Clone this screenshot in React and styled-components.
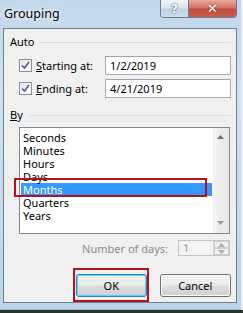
import React from "react";
import styled, { createGlobalStyle } from "styled-components";

const GlobalStyle = createGlobalStyle`
  html, body {
    margin: 0;
    padding: 0;
    background: #27332b;
  }
  body {
    width: 243px;
    height: 313px;
    overflow: hidden;
    font-family: "Noto Sans", "Liberation Sans", sans-serif;
    font-size: 11px;
    color: #000;
  }
`;

// window frame
const Frame = styled.div`
  width: 243px;
  height: 310px;
  box-sizing: border-box;
  padding: 0 6px 7px 3px;
  display: flex;
  flex-direction: column;
  background: linear-gradient(180deg, #c2d7ec 0%, #cfe0f1 30%, #c6daee 70%, #bcd3ea 100%);
  box-shadow: inset -2px 0 0 #e4eef8, inset 0 -1px 0 #9db6cf;
`;

const TitleBar = styled.div`
  height: 28px;
  display: flex;
  align-items: flex-start;
  flex-shrink: 0;
`;

const Title = styled.div`
  padding: 7px 0 0 1px;
  font-size: 12.5px;
  line-height: 14px;
  color: #000;
  text-shadow: 0 0 6px #ffffff, 0 0 3px #ffffff;
`;

const CaptionButtons = styled.div`
  margin-left: auto;
  display: flex;
  border: 1px solid #6b7d90;
  border-top: none;
  border-radius: 0 0 4px 4px;
  overflow: hidden;
  height: 17px;
`;

const CaptionButton = styled.div`
  width: ${({ w }) => w}px;
  height: 17px;
  display: flex;
  align-items: center;
  justify-content: center;
  color: #fff;
  font-family: "DejaVu Sans", sans-serif;
  font-weight: bold;
  font-size: ${({ close }) => (close ? "13px" : "12px")};
  background: ${({ close }) =>
    close
      ? "linear-gradient(180deg, #e9a99c 0%, #d47566 45%, #c24a3a 55%, #c9604c 100%)"
      : "linear-gradient(180deg, #f0f5fa 0%, #d9e4ef 45%, #c2d2e3 55%, #cedcea 100%)"};
  border-left: ${({ close }) => (close ? "1px solid #6b7d90" : "none")};
  text-shadow: ${({ close }) =>
    close ? "0 0 2px #7a1f14" : "0 0 1px #44576b, 0 0 2px #44576b"};
`;

const Client = styled.div`
  flex: 1;
  background: #f0f0f0;
  border: 1px solid #70808f;
  display: flex;
  flex-direction: column;
  padding: 0 5px 0 6px;
`;

const GroupHeader = styled.div`
  display: flex;
  align-items: center;
  height: 16px;
  margin-top: ${({ mt }) => mt}px;
  line-height: 16px;
  &::after {
    content: "";
    flex: 1;
    height: 1px;
    background: #d5dfe5;
    margin-left: 6px;
    margin-top: 1px;
  }
`;

const FieldRow = styled.div`
  display: flex;
  align-items: center;
  height: 19px;
  margin-top: ${({ mt }) => mt}px;
  padding-left: 9px;
`;

const Check = styled.div`
  width: 11px;
  height: 11px;
  border: 1px solid #8e8f8f;
  background: linear-gradient(135deg, #dcdcdc 0%, #f4f4f4 60%, #ffffff 100%);
  box-shadow: inset 0 0 0 1px #f4f4f4;
  display: flex;
  align-items: center;
  justify-content: center;
`;

const CheckLabel = styled.label`
  margin-left: 4px;
  width: 69px;
  line-height: 15px;
`;

const TextBox = styled.div`
  width: 120px;
  height: 17px;
  border: 1px solid #abadb3;
  border-top-color: #a2a4a9;
  background: #fff;
  padding-left: 4px;
  box-sizing: content-box;
  line-height: 17px;
`;

const ListWrap = styled.div`
  position: relative;
  margin: 4px 0 0 9px;
  width: 211px;
  height: 107px;
  box-sizing: border-box;
  border: 1px solid #828790;
  background: #fff;
  display: flex;
`;

const Items = styled.div`
  flex: 1;
  padding: 3px 0 0 1px;
`;

const Item = styled.div`
  height: 13px;
  line-height: 13px;
  padding-left: 2px;
  background: ${({ selected }) => (selected ? "#3399ff" : "transparent")};
  color: ${({ selected }) => (selected ? "#fff" : "#000")};
`;

const ScrollBar = styled.div`
  width: 17px;
  background: linear-gradient(90deg, #f7f7f7 0%, #ececec 40%, #e8e8e8 100%);
  display: flex;
  flex-direction: column;
  justify-content: space-between;
  align-items: center;
  padding: 7px 0 8px;
  box-sizing: border-box;
`;

const Mark = styled.div`
  position: absolute;
  left: -6px;
  top: 50px;
  width: 189px;
  height: 15px;
  border: 2px solid #b3121b;
`;

const DaysRow = styled.div`
  display: flex;
  align-items: center;
  justify-content: flex-end;
  margin-top: 6px;
  height: 16px;
  padding-right: 1px;
  color: #8a8a8a;
`;

const Spin = styled.div`
  margin-left: 10px;
  display: flex;
  height: 16px;
  border: 1px solid #c2c5c8;
  background: #f4f4f4;
  box-sizing: border-box;
`;

const SpinValue = styled.div`
  width: 30px;
  padding-left: 4px;
  line-height: 14px;
  color: #9a9a9a;
  border-right: 1px solid #d6d6d6;
`;

const SpinButtons = styled.div`
  width: 15px;
  display: flex;
  flex-direction: column;
`;

const SpinButton = styled.div`
  flex: 1;
  display: flex;
  align-items: center;
  justify-content: center;
  border: 1px solid #d0d0d0;
  background: #f0f0f0;
`;

const ButtonRow = styled.div`
  display: flex;
  margin-top: 18px;
  padding-left: 66px;
  gap: 13px;
`;

const Button = styled.div`
  position: relative;
  width: ${({ w }) => w}px;
  height: 23px;
  box-sizing: border-box;
  border: 1px solid ${({ def }) => (def ? "#3c7fb1" : "#707070")};
  border-radius: 3px;
  background: linear-gradient(180deg, #f2f2f2 0%, #ebebeb 48%, #dddddd 52%, #cfcfcf 100%);
  box-shadow: inset 0 0 0 1px ${({ def }) => (def ? "#48d8fb" : "#fcfcfc")};
  display: flex;
  align-items: center;
  justify-content: center;
  line-height: 15px;
  &::after {
    display: ${({ marked }) => (marked ? "block" : "none")};
    content: "";
    position: absolute;
    left: -4px;
    top: -7px;
    right: -3px;
    bottom: -6px;
    border: 2px solid #b3121b;
  }
`;

const Tri = ({ down, color = "#6b6b6b" }) => (
  <svg width="7" height="4" viewBox="0 0 7 4">
    <polygon points={down ? "0,0 7,0 3.5,4" : "0,4 7,4 3.5,0"} fill={color} />
  </svg>
);

const CheckMark = () => (
  <svg width="9" height="9" viewBox="0 0 9 9">
    <path d="M1 4.5 L3.5 7 L8 1" stroke="#4a5f97" strokeWidth="1.6" fill="none" />
  </svg>
);

const items = ["Seconds", "Minutes", "Hours", "Days", "Months", "Quarters", "Years"];

export default function App() {
  return (
    <>
      <GlobalStyle />
      <Frame>
        <TitleBar>
          <Title>Grouping</Title>
          <CaptionButtons>
            <CaptionButton w={27}>?</CaptionButton>
            <CaptionButton w={47} close>
              ✕
            </CaptionButton>
          </CaptionButtons>
        </TitleBar>
        <Client>
          <GroupHeader mt={5}>Auto</GroupHeader>
          <FieldRow mt={6}>
            <Check>
              <CheckMark />
            </Check>
            <CheckLabel>
              <u>S</u>tarting at:
            </CheckLabel>
            <TextBox>1/2/2019</TextBox>
          </FieldRow>
          <FieldRow mt={4}>
            <Check>
              <CheckMark />
            </Check>
            <CheckLabel>
              <u>E</u>nding at:
            </CheckLabel>
            <TextBox>4/21/2019</TextBox>
          </FieldRow>
          <GroupHeader mt={9}>
            <span>
              <u>B</u>y
            </span>
          </GroupHeader>
          <ListWrap>
            <Items>
              {items.map((v) => (
                <Item key={v} selected={v === "Months"}>
                  {v}
                </Item>
              ))}
            </Items>
            <ScrollBar>
              <Tri />
              <Tri down color="#9a9a9a" />
            </ScrollBar>
            <Mark />
          </ListWrap>
          <DaysRow>
            Number of days:
            <Spin>
              <SpinValue>1</SpinValue>
              <SpinButtons>
                <SpinButton>
                  <Tri color="#b0b0b0" />
                </SpinButton>
                <SpinButton>
                  <Tri down color="#b0b0b0" />
                </SpinButton>
              </SpinButtons>
            </Spin>
          </DaysRow>
          <ButtonRow>
            <Button w={71} def marked>
              OK
            </Button>
            <Button w={72}>Cancel</Button>
          </ButtonRow>
        </Client>
      </Frame>
    </>
  );
}
